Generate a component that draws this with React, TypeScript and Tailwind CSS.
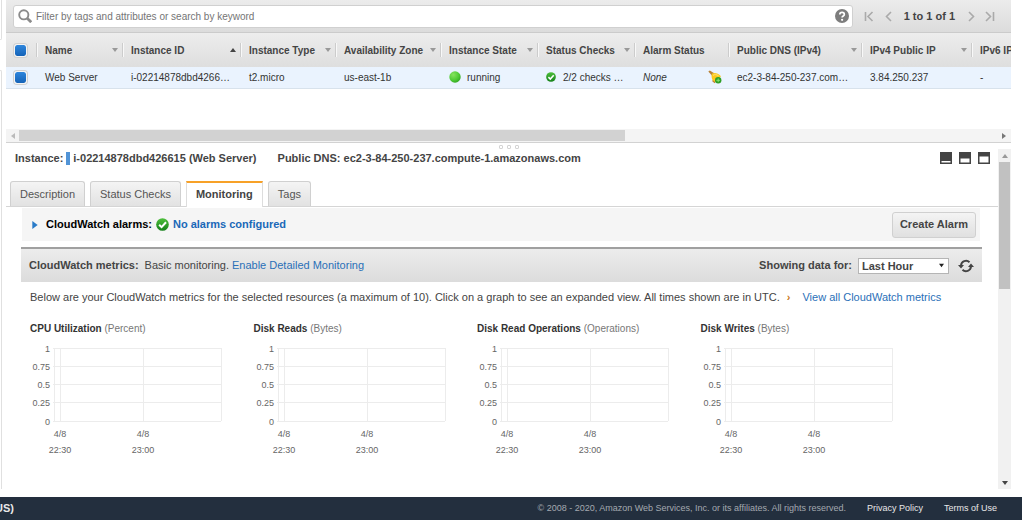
import { ReactNode } from 'react'

interface Column {
  key: string
  label: string
  width: string
  sort?: 'up' | 'down'
}

interface Metric {
  name: string
  unit: string
}

const columns: Column[] = [
  { key: 'name', label: 'Name', width: 'w-[86px]', sort: 'down' },
  { key: 'id', label: 'Instance ID', width: 'w-[118px]', sort: 'up' },
  { key: 'type', label: 'Instance Type', width: 'w-[95px]', sort: 'down' },
  { key: 'zone', label: 'Availability Zone', width: 'w-[105px]', sort: 'down' },
  { key: 'state', label: 'Instance State', width: 'w-[97px]', sort: 'down' },
  { key: 'checks', label: 'Status Checks', width: 'w-[97px]', sort: 'down' },
  { key: 'alarm', label: 'Alarm Status', width: 'w-[94px]' },
  { key: 'dns', label: 'Public DNS (IPv4)', width: 'w-[133px]', sort: 'down' },
  { key: 'ip', label: 'IPv4 Public IP', width: 'w-[110px]', sort: 'down' },
  { key: 'ipv6', label: 'IPv6 IPs', width: 'w-[80px]', sort: 'down' },
]

const metrics: Metric[] = [
  { name: 'CPU Utilization', unit: 'Percent' },
  { name: 'Disk Reads', unit: 'Bytes' },
  { name: 'Disk Read Operations', unit: 'Operations' },
  { name: 'Disk Writes', unit: 'Bytes' },
]

const tabs = ['Description', 'Status Checks', 'Monitoring', 'Tags']

const yTicks = [
  { label: '1', y: 4 },
  { label: '0.75', y: 22 },
  { label: '0.5', y: 40 },
  { label: '0.25', y: 58 },
  { label: '0', y: 77 },
]

const xTicks = [
  { x: 30, time: '22:30' },
  { x: 113, time: '23:00' },
]

function CheckIcon({ className }: { className: string }) {
  return (
    <svg viewBox="0 0 14 14" className={className} aria-hidden="true">
      <defs>
        <linearGradient id="check-green" x1="0" y1="0" x2="0" y2="1">
          <stop offset="0" stopColor="#4fc03c" />
          <stop offset="1" stopColor="#14801a" />
        </linearGradient>
      </defs>
      <circle cx="7" cy="7" r="6.8" fill="url(#check-green)" />
      <path d="M3.4 7.2 6 9.8l4.8-5.2" fill="none" stroke="#fff" strokeWidth="2.2" />
    </svg>
  )
}

function RunningIcon() {
  return (
    <svg viewBox="0 0 12 12" className="size-3 shrink-0" aria-hidden="true">
      <defs>
        <radialGradient id="running-green" cx="0.35" cy="0.3" r="0.8">
          <stop offset="0" stopColor="#86e35e" />
          <stop offset="0.6" stopColor="#4fca35" />
          <stop offset="1" stopColor="#2da01f" />
        </radialGradient>
      </defs>
      <circle cx="6" cy="6" r="5.7" fill="url(#running-green)" />
    </svg>
  )
}

function AlarmIcon() {
  return (
    <svg viewBox="0 0 14 14" className="h-[14px] w-[14px]" aria-hidden="true">
      <path d="M.3 1.6 1.8.4l4.4 2.8-2.1 2.6z" fill="#b98238" />
      <path d="M4.2 3.6c2.4-1.4 5.6-.8 8.8 2.6L6.4 12.8C4.200 10.600 2.600 6.400 4.200 3.600z" fill="#fcc91c" />
      <path d="M5 5.400c1.600-1.200 3.600-1 5.600.4" stroke="#ffe27a" strokeWidth="1" fill="none" />
      <path d="M4.400 10.600 7 12.800" stroke="#b98238" strokeWidth="1.2" fill="none" />
      <circle cx="10.2" cy="10.3" r="3.2" fill="#2f9f25" />
      <path d="M8.400 10.300h3.600M10.200 8.500v3.600" stroke="#8be577" strokeWidth="0.9" />
    </svg>
  )
}

function Caret({ direction, className }: { direction: 'up' | 'down' | 'left' | 'right'; className: string }) {
  const paths = {
    up: 'M0 5 3 1l3 4z',
    down: 'M0 1h6L3 5z',
    left: 'M5 0v6L1 3z',
    right: 'M1 0v6l4-3z',
  }
  return (
    <svg viewBox="0 0 6 6" className={`shrink-0 fill-current ${className}`} aria-hidden="true">
      <path d={paths[direction]} />
    </svg>
  )
}

function RowCheckbox({ label }: { label: string }) {
  return (
    <input
      type="checkbox"
      defaultChecked
      aria-label={label}
      className="ml-2 block h-[13px] w-[13px] appearance-none rounded-[3px] border border-[#f4f4f4] bg-linear-to-b from-[#2f86dc] to-[#1463b8] bg-clip-padding shadow-[0_0_0_1px_#d0d0d0]"
    />
  )
}

function PagerButton({ label, d }: { label: string; d: string }) {
  return (
    <button type="button" aria-label={label}>
      <svg viewBox="0 0 10 11" className="h-[11px] w-[10px] fill-none stroke-[#aaa] stroke-[1.6]">
        <path d={d} />
      </svg>
    </button>
  )
}

function Toolbar() {
  return (
    <div className="flex h-[33px] items-center border-b border-[#cbcbcb] bg-linear-to-b from-[#ececec] to-[#dcdcdc] pl-[7px] pr-4">
      <div className="flex h-[23px] flex-1 items-center rounded-[3px] border border-[#d0d0d0] bg-white pl-1 pr-[3px]">
        <svg viewBox="0 0 14 14" className="h-[14px] w-[14px] fill-none stroke-[#8b8b8b]" aria-hidden="true">
          <circle cx="5.8" cy="5.8" r="4.6" strokeWidth="1.9" />
          <path d="m9.200 9.200 4 4" strokeWidth="2.8" />
        </svg>
        <input
          type="text"
          aria-label="Filter instances"
          placeholder="Filter by tags and attributes or search by keyword"
          className="ml-1 min-w-0 flex-1 text-[10px] outline-none placeholder:text-[#757575]"
        />
        <button type="button" aria-label="Help">
          <svg viewBox="0 0 14 14" className="h-[14px] w-[14px]">
            <circle cx="7" cy="7" r="7" fill="#7d7d7d" />
            <path d="M4.800 5.600c0-3 4.500-2.800 4.500-.2C9.300 7 7.100 6.900 7.100 8.600" fill="none" stroke="#fff" strokeWidth="1.7" />
            <circle cx="7.1" cy="10.8" r="1.1" fill="#fff" />
          </svg>
        </button>
      </div>
      <div className="ml-[11px] flex items-center gap-[10px]">
        <PagerButton label="First page" d="M1.500 1v9M8.500 1 4 5.500 8.500 10" />
        <PagerButton label="Previous page" d="M7 1 2.500 5.500 7 10" />
        <span className="text-[11px] font-bold text-[#444]">1 to 1 of 1</span>
        <PagerButton label="Next page" d="M4 1l4.500 4.500L4 10" />
        <PagerButton label="Last page" d="M1 1l4.500 4.500L1 10M8.500 1v9" />
      </div>
    </div>
  )
}

function InstanceTable() {
  const cells: Record<string, ReactNode> = {
    name: 'Web Server',
    id: 'i-02214878dbd4266…',
    type: 't2.micro',
    zone: 'us-east-1b',
    state: (
      <span className="flex items-center gap-[6px]">
        <RunningIcon />
        running
      </span>
    ),
    checks: (
      <span className="flex items-center gap-[7px]">
        <CheckIcon className="size-[10px]" />
        2/2 checks …
      </span>
    ),
    alarm: (
      <span className="flex items-center justify-between pr-[6px] italic">
        None
        <AlarmIcon />
      </span>
    ),
    dns: 'ec2-3-84-250-237.com…',
    ip: '3.84.250.237',
    ipv6: '-',
  }

  return (
    <div className="h-[96px] overflow-hidden">
      <table className="w-[1045px] table-fixed border-collapse text-left text-[10px]">
        <thead>
          <tr className="h-[34px] bg-linear-to-b from-[#ededed] to-[#dedede]">
            <th className="w-[30px] p-0">
              <RowCheckbox label="Select all instances" />
            </th>
            {columns.map((column) => (
              <th key={column.key} className={`p-0 ${column.width}`}>
                <div className="flex h-[14px] items-center justify-between border-l border-[#cccccc] pl-2 pr-1 text-[#444] shadow-[inset_1px_0_0_#f8f8f8]">
                  <span className="whitespace-nowrap">{column.label}</span>
                  {column.sort && (
                    <Caret
                      direction={column.sort}
                      className={column.sort === 'up' ? 'size-[6px] text-[#444]' : 'size-[6px] text-[#999]'}
                    />
                  )}
                </div>
              </th>
            ))}
          </tr>
        </thead>
        <tbody>
          <tr className="h-[21px] border-b border-[#d8e2ec] bg-[#eaf3fe] text-[#333]">
            <td className="p-0">
              <RowCheckbox label="Select Web Server" />
            </td>
            {columns.map((column) => (
              <td key={column.key} className="py-0 pl-[9px] pr-0 whitespace-nowrap">
                {cells[column.key]}
              </td>
            ))}
          </tr>
        </tbody>
      </table>
    </div>
  )
}

function MetricChart({ metric }: { metric: Metric }) {
  return (
    <div>
      <h3 className="text-[10px] leading-[14px] font-bold text-[#333]">
        {metric.name} <span className="font-normal text-[#777]">({metric.unit})</span>
      </h3>
      <svg viewBox="0 0 200 116" className="mt-2 h-[116px] w-[200px] fill-[#666] text-[9px]" role="img" aria-label={metric.name}>
        <g stroke="#ececec" shapeRendering="crispEdges">
          {yTicks.map((tick) => (
            <line key={tick.label} x1="23" x2="191" y1={tick.y} y2={tick.y} />
          ))}
          {[24, 30, 113, 191].map((x) => (
            <line key={x} x1={x} x2={x} y1="4" y2="77" />
          ))}
        </g>
        {yTicks.map((tick) => (
          <text key={tick.label} x="20" y={tick.y + 4} textAnchor="end">
            {tick.label}
          </text>
        ))}
        {xTicks.map((tick) => (
          <g key={tick.time} textAnchor="middle">
            <text x={tick.x} y="93">4/8</text>
            <text x={tick.x} y="109">{tick.time}</text>
          </g>
        ))}
      </svg>
    </div>
  )
}

function LayoutButton({ label, y }: { label: string; y: number }) {
  return (
    <button type="button" aria-label={label}>
      <svg viewBox="0 0 12 12" className="size-3">
        <path d="M0 0h12v12H0z" fill="#444" />
        <path d={`M1.500 ${y}h9V10.500h-9z`} fill="#fff" />
      </svg>
    </button>
  )
}

function DetailsPanel() {
  return (
    <div className="min-w-0 flex-1 text-[11px] text-[#444]">
      <div className="flex items-center pl-[9px] pr-2 pt-[3px] leading-[14px] font-bold">
        <span>Instance:</span>
        <span className="ml-[3px] h-[13px] w-[4px] bg-[#5294d6]" />
        <span className="ml-[3px]">i-02214878dbd426615 (Web Server)</span>
        <span className="ml-[21px]">Public DNS: ec2-3-84-250-237.compute-1.amazonaws.com</span>
        <div className="ml-auto flex gap-[7px]">
          <LayoutButton label="Collapse panel" y={9} />
          <LayoutButton label="Split panel" y={6.5} />
          <LayoutButton label="Expand panel" y={4.5} />
        </div>
      </div>

      <div role="tablist" className="mt-4 flex gap-[5px] border-b border-[#d5d5d5] px-1">
        {tabs.map((tab) => (
          <button
            key={tab}
            type="button"
            role="tab"
            aria-selected={tab === 'Monitoring'}
            className={
              tab === 'Monitoring'
                ? '-mb-px h-[26px] border-x border-t-2 border-x-[#ddd] border-t-[#f7a128] bg-white px-[9px] pb-px font-bold text-[#444]'
                : 'h-[25px] rounded-t-[3px] border border-b-0 border-[#d0d0d0] bg-linear-to-b from-[#f4f4f4] to-[#e2e2e2] px-[9px] text-[#555]'
            }
          >
            {tab}
          </button>
        ))}
      </div>

      <div className="mt-px ml-4 mr-[18px] flex h-[33px] items-center bg-[#f5f5f5] pl-[9px] pr-1 font-bold text-black">
        <Caret direction="right" className="size-[8px] text-[#2a7bc8]" />
        <span className="ml-[7px]">CloudWatch alarms:</span>
        <CheckIcon className="mx-1 size-[13px]" />
        <a href="#alarms" className="text-[#1a68b8]">No alarms configured</a>
        <button
          type="button"
          className="ml-auto h-[26px] rounded-[3px] border border-[#d0d0d0] bg-linear-to-b from-[#f4f4f4] to-[#e0e0e0] px-[7px] font-bold text-[#444]"
        >
          Create Alarm
        </button>
      </div>

      <div className="mt-[6px] ml-[15px] mr-4 flex h-[35px] items-center border-t-2 border-[#a0a0a0] bg-linear-to-b from-[#ececec] to-[#dcdcdc] pl-2 pr-2">
        <span className="font-bold">CloudWatch metrics:</span>
        <span className="ml-[6px]">Basic monitoring.</span>
        <a href="#detailed" className="ml-[3px] text-[#2a70b8]">Enable Detailed Monitoring</a>
        <label htmlFor="range" className="ml-auto font-bold">Showing data for:</label>
        <div className="ml-[6px] grid items-center border border-[#b5b5b5] bg-white">
          <select
            id="range"
            defaultValue="Last Hour"
            className="col-start-1 row-start-1 h-[14px] w-[89px] appearance-none pl-[3px] leading-[14px] font-bold outline-none"
          >
            <option>Last Hour</option>
            <option>Last 3 Hours</option>
          </select>
          <Caret direction="down" className="pointer-events-none col-start-1 row-start-1 mr-1 size-[5px] justify-self-end text-[#222]" />
        </div>
        <button type="button" aria-label="Refresh" className="ml-[9px]">
          <svg viewBox="0 0 16 14" className="h-[14px] w-[16px]">
            <path d="M3 6.500A5 5 0 0 1 11.500 3.300M13 7.500A5 5 0 0 1 4.500 10.700" fill="none" stroke="#444" strokeWidth="2" />
            <path d="M0 6h6L3 9.500zM10 8h6l-3-3.500z" fill="#444" />
          </svg>
        </button>
      </div>

      <p className="mt-2 ml-6 leading-[14px]">
        Below are your CloudWatch metrics for the selected resources (a maximum of 10). Click on a graph to see an
        expanded view. All times shown are in UTC.
        <span className="ml-[7px] font-bold text-[#c8781a]">›</span>
        <a href="#metrics" className="ml-[12px] text-[#2a70b8]">View all CloudWatch metrics</a>
      </p>

      <div className="mt-[18px] ml-6 mr-[74px] grid grid-cols-4">
        {metrics.map((metric) => (
          <MetricChart key={metric.name} metric={metric} />
        ))}
      </div>
    </div>
  )
}

export default function App() {
  return (
    <div className="flex min-h-screen flex-col bg-white font-['Liberation_Sans',Arial,sans-serif]">
      <div className="flex flex-1">
        <div className="flex w-[6px] flex-col pb-2">
          <div className="h-10 w-[2px] rounded-br-sm border-r border-b border-[#e0e0e0]" />
          <div className="mt-[30px] w-[2px] flex-1 rounded-tr-sm border-t border-r border-[#e0e0e0]" />
        </div>

        <main className="mr-[11px] flex min-w-0 flex-1 flex-col">
          <Toolbar />
          <InstanceTable />
          <div className="flex h-[14px] items-center border-b border-[#d2d2d2] bg-[#f4f4f4] px-1">
            <Caret direction="left" className="size-[6px] text-[#bbb]" />
            <div className="ml-[3px] h-[11px] w-[606px] bg-[#d2d2d2]" />
            <Caret direction="right" className="ml-auto size-[6px] text-[#777]" />
          </div>
          <div className="flex h-[6px] items-end justify-center gap-1">
            <span className="size-[4px] rounded-[1px] border border-[#d4d4d4]" />
            <span className="size-[4px] rounded-[1px] border border-[#d4d4d4]" />
            <span className="size-[4px] rounded-[1px] border border-[#d4d4d4]" />
          </div>

          <div className="-mt-px flex flex-1">
            <DetailsPanel />
            <div className="mt-px mb-2 flex w-[13px] flex-col items-center bg-[#f1f1f1]">
              <Caret direction="up" className="mt-[4px] size-[6px] text-[#999]" />
              <div className="mt-[3px] h-[127px] w-[11px] bg-[#c1c1c1]" />
              <Caret direction="down" className="mt-auto mb-[3px] size-[6px] text-[#444]" />
            </div>
          </div>
        </main>
      </div>

      <footer className="flex h-[23px] items-center bg-[#232f3e] pr-[25px] text-[#e8e8e8]">
        <div className="flex w-[14px] justify-end overflow-hidden">
          <span className="text-[11px] font-bold whitespace-nowrap">English (US)</span>
        </div>
        <span className="ml-auto text-[9px] text-[#a3a9b0]">
          © 2008 - 2020, Amazon Web Services, Inc. or its affiliates. All rights reserved.
        </span>
        <a href="#privacy" className="ml-[21px] text-[9px]">Privacy Policy</a>
        <a href="#terms" className="ml-[21px] text-[9px]">Terms of Use</a>
      </footer>
    </div>
  )
}
